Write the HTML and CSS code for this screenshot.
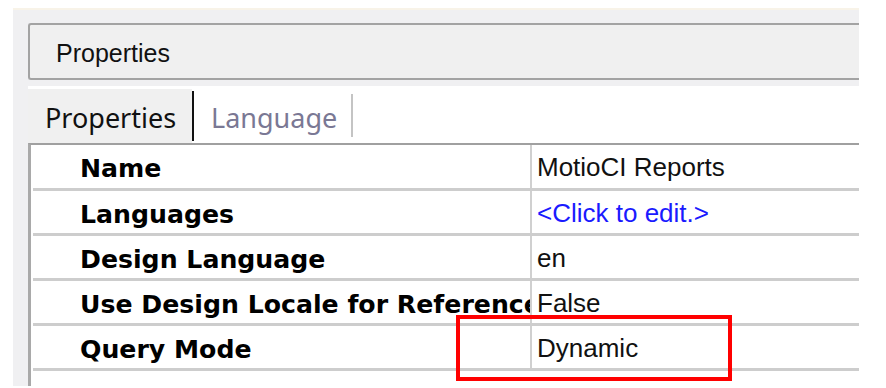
FILE: index.html
```html
<!DOCTYPE html>
<html>
    <head>
        <title>Properties</title>
        <link rel="stylesheet" href="styles.css">
    </head>
    <body>
        <div class="panel">
            <div class="header">Properties</div>

            <div class="tabs">
                <div class="tab active">Properties</div>
                <div class="tab-sep dark"></div>
                <div class="tab">Language</div>
                <div class="tab-sep"></div>
            </div>

            <div class="grid">
                <div class="row">
                    <div class="label">Name</div>
                    <div class="value">MotioCI Reports</div>
                </div>
                <div class="row">
                    <div class="label">Languages</div>
                    <div class="value link">&lt;Click to edit.&gt;</div>
                </div>
                <div class="row">
                    <div class="label">Design Language</div>
                    <div class="value">en</div>
                </div>
                <div class="row">
                    <div class="label">Use Design Locale for Reference</div>
                    <div class="value">False</div>
                </div>
                <div class="row">
                    <div class="label">Query Mode</div>
                    <div class="value">Dynamic</div>
                </div>
            </div>
        </div>

        <div class="highlight"></div>
    </body>
</html>
```

FILE: styles.css
```css
body {
    margin: 0;
    background: #fff;
    font-family: "Liberation Sans", Arial, sans-serif;
    color: #000;
}

.panel {
    margin: 8px 0 0 13px;
    width: 846px;
    height: 378px;
    background: #f0f0f2;
    border-top: 2px solid #f8f3e8;
    padding: 13px 0 0 15px;
    box-sizing: border-box;
    overflow: hidden;
    display: flex;
    flex-direction: column;
}

.header {
    height: 53px;
    border: 2px solid #a3a3a3;
    border-right: none;
    border-radius: 3px 0 0 3px;
    background: #f0f0f0;
    padding-left: 26px;
    font-size: 25px;
    line-height: 57px;
    color: #111;
    flex: none;
}

.tabs {
    margin-top: 6px;
    height: 57px;
    background: #fff;
    display: flex;
    align-items: stretch;
    flex: none;
}

.tab {
    font-family: "Noto Sans", sans-serif;
    font-size: 27px;
    line-height: 57px;
    padding: 0 14px 0 17px;
    border-top: 3px solid #fff;
    color: #7a7894;
}

.tab.active {
    width: 164px;
    box-sizing: border-box;
    background: #f0f0f0;
    color: #111;
}

.tab-sep {
    width: 2px;
    height: 43px;
    align-self: center;
    background: #c4c4c4;
    margin-top: 2px;
}

.tab-sep.dark {
    height: 50px;
    background: #111;
}

.grid {
    flex: 1;
    background: #fff;
    border-left: 3px solid #a9a9a9;
    border-top: 2px solid #a0a0a0;
    padding-left: 2px;
}

.row {
    display: flex;
    height: 43px;
    border-bottom: 3px solid #cdcdcd;
}

.row + .row {
    height: 42px;
}

.label {
    width: 499px;
    padding-left: 47px;
    box-sizing: border-box;
    font-family: "DejaVu Sans", sans-serif;
    font-weight: bold;
    font-size: 25.2px;
    line-height: 47px;
    white-space: nowrap;
    overflow: hidden;
    border-right: 2px solid #d0d0d0;
}

.value {
    padding-left: 5px;
    font-size: 26px;
    line-height: 45px;
    white-space: nowrap;
    color: #111;
}

.value.link {
    color: #1a1aff;
}

.highlight {
    position: absolute;
    left: 456px;
    top: 315px;
    width: 276px;
    height: 66px;
    box-sizing: border-box;
    border: 4px solid #f00;
}
```
